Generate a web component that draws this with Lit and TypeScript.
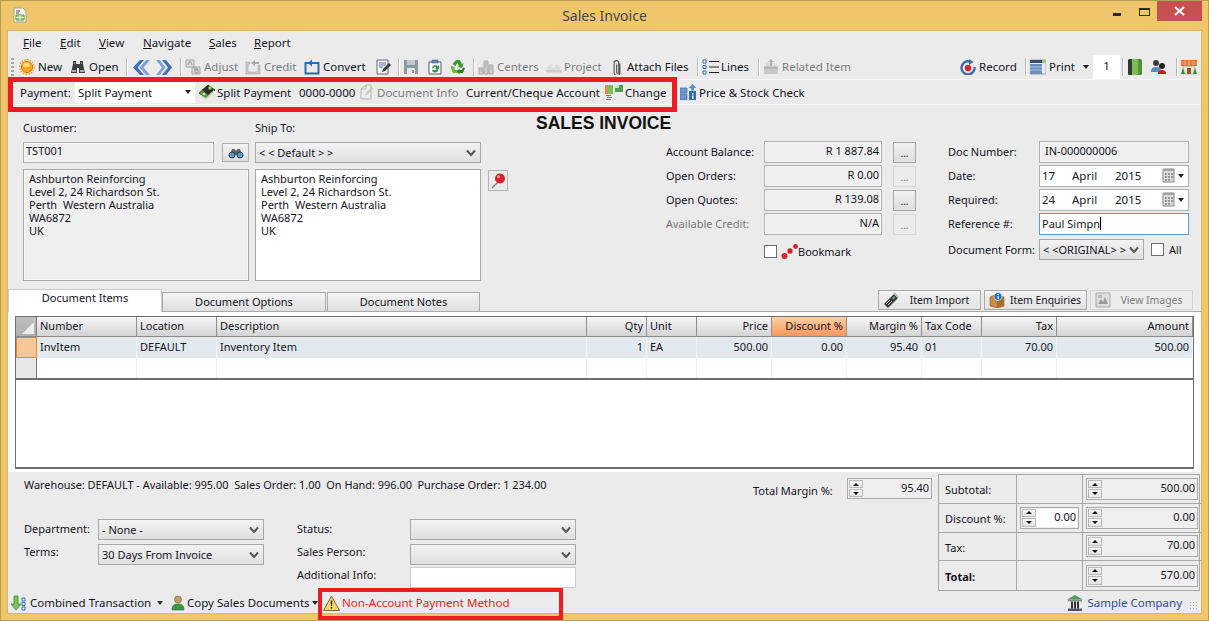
import { LitElement, html, css, svg } from 'lit';
import { customElement } from 'lit/decorators.js';

const ic = (body: unknown, w = 16, h = 16) =>
  html`<svg class="ic" width=${w} height=${h} viewBox="0 0 ${w} ${h}">${body}</svg>`;

const icons: Record<string, () => unknown> = {
  doc: () => ic(svg`<path d="M2 1h9l3 3v11H2z" fill="#f4f4ea" stroke="#a9a98f"/><path d="M4 4h4M4 6h3" stroke="#555"/><path d="M4 8h8v5H4z" fill="#9fd08a" stroke="#5c9c56"/><path d="M4 10.5h8M8 8v5" stroke="#e8f4e0"/>`),
  sun: () => ic(svg`<circle cx="8" cy="8" r="7.2" fill="none" stroke="#f0a52a" stroke-width="1.4" stroke-dasharray="1.6 1.2"/><circle cx="8" cy="8" r="5.6" fill="#f9a81c" stroke="#d9780f"/><ellipse cx="7.4" cy="6" rx="3.4" ry="2.2" fill="#ffdf7c"/>`),
  binoc: () => ic(svg`<path d="M3 2h3v3h4V2h3v3l2 9H9V9H7v5H1l2-9z" fill="#3f3f3f"/><path d="M2 11h4v2H2zM10 11h4v2h-4z" fill="#a9a9a9"/><path d="M4 3h1v2H4zM11 3h1v2h-1z" fill="#8a8a8a"/>`),
  back: () => ic(svg`<path d="M9 1 2 8.500 9 16h4L6.500 8.500 13 1z" fill="#3c6fb6"/><path d="M15 1 8.500 8.500 15 16h4l-6.500-7.500L19 1z" fill="#7da3d6"/>`, 20, 17),
  fwd: () => ic(svg`<path d="M2 1h3.500l6 7.500-6 7.500H2l6-7.500z" fill="#7da3d6"/><path d="M8 1h4l6 7.500-6 7.500H8l6-7.500z" fill="#3c6fb6"/>`, 20, 17),
  adjust: () => ic(svg`<path d="M1 1h8v7H1zM7 8h8v7H7z" fill="#dcdcdc" stroke="#a8a8a8"/><path d="M3 6l2-4 2 4M9 9h3l1 2-3 0zM10 11h3v3h-3z" fill="none" stroke="#9a9a9a"/>`),
  credit: () => ic(svg`<path d="M1 3h4v2H3v8h10V6h2v9H1z" fill="#c9c9c9" stroke="#a5a5a5" stroke-width=".6"/><path d="M6 4l4-3v2h4v2h-4v2z" fill="#a9a9a9"/>`),
  convert: () => ic(svg`<path d="M5 4H1.500v10.500h13V4h-3" fill="none" stroke="#2c6db5" stroke-width="2"/><path d="M4 4l4-3.500V3h6v2H8v2.500z" fill="#2c6db5"/>`),
  edit: () => ic(svg`<path d="M2 1h11v14H2z" fill="#f2f4f7" stroke="#667"/><path d="M4 4h7M4 6h7M4 8h4" stroke="#4d76ad"/><path d="M7 13l1-3 6-6 2 2-6 6z" fill="#3a3a3a"/>`),
  floppy: () => ic(svg`<path d="M1 1h14v14H1z" fill="#8f9aa0"/><path d="M4 1h8v5H4z" fill="#c3c9cd"/><path d="M4 9h8v6H4z" fill="#e3e5e6"/><path d="M9 11h2v3H9z" fill="#8f9aa0"/>`),
  clip: () => ic(svg`<path d="M2 3h12v12H2z" fill="#fff" stroke="#4a5a6d"/><path d="M5 1h6v3H5z" fill="#6c86a8" stroke="#3e5878" stroke-width=".6"/><path d="M5 9a3 3 0 0 1 5.500-1.500L12 6v4H8l1.300-1.300A1.800 1.800 0 0 0 6 9.500z" fill="#2f9a45"/><path d="M11 10a3 3 0 0 1-6 1l1.300-.5A1.800 1.800 0 0 0 9.500 10z" fill="#2f9a45"/>`),
  recycle: () => ic(svg`<path d="M6 1h4l2 4 1.500-1-1 5-5-1 1.500-1-1.500-3-2 3-3-2z" fill="#3f9a35"/><path d="M1 9l2 5h5v-3H5l-1-2 1.500-1-4.500-1z" fill="#66b84f"/><path d="M15 9l-2 5H9.500v1.500L7 12.500 9.500 9.500V11H12l1-2.500z" fill="#2f7e2a"/>`),
  centers: () => ic(svg`<path d="M1 9h4v6H1zM6 2h4v13H6zM11 6h4v9h-4z" fill="#cfcfcf" stroke="#a6a6a6"/><path d="M7.500 4h1M7.500 6h1M7.500 8h1M12.500 8h1M12.500 10h1M2.500 11h1" stroke="#8e8e8e"/>`),
  project: () => ic(svg`<path d="M2 11a6.500 6.500 0 0 1 13 0z" fill="#dcdcdc"/><path d="M1 11h16v2.500H1z" fill="#cbcbcb"/><path d="M7 4.500h3V9H7z" fill="#e9e9e9"/>`, 18, 16),
  paperclip: () => ic(svg`<path d="M9 4v8.500a2.500 2.500 0 0 1-5 0V3.500a2 2 0 0 1 4 0V12a.9.900 0 0 1-1.800 0V5" fill="none" stroke="#555" transform="translate(-.5 0) scale(1.150 1.100)"/>`, 12, 16),
  lines: () => ic(svg`<path d="M1 1h3v3H1zM1 6.500h3v3H1zM1 12h3v3H1z" fill="#fff" stroke="#2c6db5"/><path d="M7 2.500h10M7 8h10M7 13.500h10" stroke="#222" stroke-width="1.200"/>`, 18, 16),
  related: () => ic(svg`<path d="M1 7h14v8H1z" fill="#c8c8c8"/><path d="M1 7l3-3h8l3 3z" fill="#dedede"/><path d="M8 0l3 3H9v4H7V3H5z" fill="#b2b2b2"/><path d="M1 9h14" stroke="#a2a2a2"/>`),
  record: () => ic(svg`<path d="M9.500 2.500A6.500 6.500 0 1 0 14.500 8" fill="none" stroke="#3d6ea8" stroke-width="2.400"/><path d="M9 0l4.500 3-4.500 3z" fill="#3d6ea8"/><circle cx="8" cy="9" r="3.200" fill="#d8222a"/>`),
  print: () => ic(svg`<path d="M0 1h16v14H0z" fill="#e9edf3" stroke="#5f6f85" stroke-width=".6"/><path d="M0 1h12v3H0z" fill="#3a4b66"/><path d="M12 1h4v3h-4z" fill="#9cc47c"/><path d="M0 5h12v10H0z" fill="#6d8fbc"/><path d="M0 8h12M0 11h12" stroke="#a9c0dd"/>`),
  book: () => ic(svg`<rect x="0" y="0" width="14" height="16" rx="1.500" fill="#4f9434"/><path d="M0 1.500A1.500 1.500 0 0 1 1.500 0H4v16H1.500A1.500 1.500 0 0 1 0 14.500z" fill="#333a33"/><path d="M4 0h6v16H4z" fill="#7cbc55"/>`, 15, 16),
  people: () => ic(svg`<circle cx="5" cy="4" r="3" fill="#3b3b3b"/><path d="M0 13c0-4 2-5 5-5s5 1 5 5z" fill="#5d87bd"/><circle cx="11" cy="7" r="3" fill="#222"/><path d="M7 15c0-3 1.500-4 4-4s4 1 4 4z" fill="#d3161c"/>`),
  house: () => ic(svg`<path d="M0 1h16v6H0z" fill="#e9622a"/><path d="M0 3h16M0 5h16M4 1v6M8 1v6M12 1v6" stroke="#fbc8a6" stroke-width=".6"/><path d="M2 7h12v8H2z" fill="#e8e4d0" stroke="#888" stroke-width=".5"/><path d="M6 9h4v6H6z" fill="#8a5a2a"/><path d="M0 15l2-6 2 6zM12 15l2-6 2 6z" fill="#2f8d35"/>`),
  split: () => ic(svg`<path d="M0 9l9-8 7 5-9 9z" fill="#5c9a44" stroke="#1f3d1a" stroke-width=".8"/><path d="M3 6l6-5 6 5-6 5z" fill="#2e2e2e"/><path d="M1 11l6 4 8-8" fill="none" stroke="#cfe7bb" stroke-width="1.400"/><circle cx="11" cy="4" r="1.800" fill="#8fd06a"/><circle cx="5" cy="10" r="1.300" fill="#cfe7bb"/>`),
  docinfo: () => ic(svg`<path d="M3 5l5-4h5v14H3z" fill="#ececec" stroke="#b5b5b5"/><path d="M3 5h5V1" fill="none" stroke="#b5b5b5"/><path d="M7 12l1-3 6-6 1.500 1.500-6 6z" fill="#c6c6c6"/>`),
  change: () => ic(svg`<path d="M0 1h8v9H0z" fill="#e98a3c"/><path d="M3 1h5v9H3z" fill="#7ebc5a"/><path d="M10 1h8v7h-8z" fill="#4fa14c"/><path d="M10 1h4v3h-4z" fill="#cfe7bb"/><path d="M1 11h5v1H1zM2 13h5v1H2zM1 15h5v1H1z" fill="#777"/>`, 18, 16),
  price: () => ic(svg`<path d="M0 4h7v5H0zM0 10h7v6H0z" fill="#6d97cc" stroke="#2d5f9e" stroke-width=".6"/><path d="M9 7h7v9H9z" fill="#2d6db5"/><path d="M12.500 0l4 4h-2.500v2.500h-3V4H8.500z" fill="#5d93d3"/><path d="M12 9h1.500v1.500H12zM12 11.500h1.500V15H12z" fill="#fff"/>`),
  binosmall: () => ic(svg`<path d="M4 2h2.500l1.500 2 1.500-2H12l2 6H2z" fill="#5a6670"/><circle cx="4" cy="8" r="3" fill="#5b9bd5" stroke="#29343d"/><circle cx="12" cy="8" r="3" fill="#5b9bd5" stroke="#29343d"/>`, 16, 12),
  pin: () => ic(svg`<path d="M2 15l6-6" stroke="#8a7a5a" stroke-width="1.200"/><circle cx="10" cy="5.500" r="5" fill="#dd2027"/><circle cx="8.500" cy="3.800" r="1.500" fill="#f79a9d"/>`),
  cal: () => ic(svg`<path d="M1 1h11v13H1z" fill="#dcdcdc" stroke="#8a8a8a"/><path d="M1 1h11v2H1z" fill="#a5a5a5"/><path d="M3 5h2v2H3zM6 5h2v2H6zM9 5h2v2H9zM3 8h2v2H3zM6 8h2v2H6zM9 8h2v2H9zM3 11h2v2H3zM6 11h2v2H6z" fill="#9a9a9a"/>`, 14, 16),
  dots: () => ic(svg`<circle cx="3.500" cy="13" r="3" fill="#d8222a"/><circle cx="9" cy="8" r="2.700" fill="#d8222a"/><circle cx="14.500" cy="3.500" r="2.400" fill="#d8222a"/>`, 17, 16),
  scanner: () => ic(svg`<path d="M1 12L11 2l4 4-10 10z" fill="#3a3a3a"/><path d="M9 6l2-2 1.500 1.500-2 2z" fill="#62b04c"/><path d="M3 12l4-4M5 13l4-4" stroke="#c8c8c8"/><path d="M11 1l4 4" stroke="#bbb" stroke-width="2"/>`),
  enquire: () => ic(svg`<path d="M1 5l7-3 7 3v9l-7 2-7-2z" fill="#c98b46" stroke="#8a5a24" stroke-width=".6"/><path d="M8 7v9l7-2V5z" fill="#a56d30"/><circle cx="9" cy="4.500" r="4" fill="#1f6fc0" stroke="#fff" stroke-width=".6"/><path d="M8.500 2h1.200v1.200H8.500zM8.500 4h1.200v3H8.500z" fill="#fff"/>`),
  images: () => ic(svg`<path d="M1 1h14v14H1z" fill="#dedede" stroke="#ababab"/><path d="M3 12l3-5 2 3 2-5 3 7z" fill="#9b9b9b"/><path d="M3 3h4v3H3z" fill="#bcbcbc"/>`),
  combined: () => ic(svg`<path d="M3 1h4v8h3l-5 6-5-6h3z" fill="#7fc65a" stroke="#2e8a2a" stroke-width=".8"/><path d="M11 3h3v3h-3zM11 7.500h3v3h-3zM11 12h3v3h-3z" fill="#fff" stroke="#2c6db5"/>`),
  person: () => ic(svg`<circle cx="8" cy="4.500" r="3.500" fill="#c79a6a" stroke="#7a5c38" stroke-width=".6"/><path d="M2 15c0-5 2.500-6 6-6s6 1 6 6z" fill="#3f9a3a" stroke="#276c24" stroke-width=".6"/>`),
  warn: () => ic(svg`<path d="M8.500 1l8 14.500H.5z" fill="#f8d55c" stroke="#7a6a3a"/><path d="M7.700 5.500h1.600L9 11H8zM7.800 12h1.400v1.500H7.800z" fill="#222"/>`, 17, 16),
  bank: () => ic(svg`<path d="M8 0l8 4.500H0z" fill="#4e9e5a"/><path d="M1 4.500h14v2H1z" fill="#7f8f84"/><path d="M3 6.500h10v7H3z" fill="#e8e8e8"/><path d="M4 6.500h2v7H4zM7 6.500h2v7H7zM10 6.500h2v7h-2z" fill="#333"/><path d="M1 13.500h14V16H1z" fill="#555"/>`),
};

type Tool = { icon?: string; label?: string; w?: number; off?: boolean; sep?: boolean; gap?: number };

const mainLeft: Tool[] = [
  { icon: 'sun', label: 'New', w: 51 },
  { icon: 'binoc', label: 'Open', w: 55 },
  { sep: true },
  { icon: 'back', w: 23 },
  { icon: 'fwd', w: 25 },
  { sep: true },
  { icon: 'adjust', label: 'Adjust', w: 60, off: true },
  { icon: 'credit', label: 'Credit', w: 59, off: true },
  { icon: 'convert', label: 'Convert', w: 71 },
  { icon: 'edit', w: 22 },
  { sep: true },
  { icon: 'floppy', w: 24, off: true },
  { icon: 'clip', w: 23 },
  { icon: 'recycle', w: 22 },
  { sep: true },
  { icon: 'centers', label: 'Centers', w: 67, off: true },
  { icon: 'project', label: 'Project', w: 65, off: true, gap: 1 },
  { icon: 'paperclip', label: 'Attach Files', w: 86, gap: 5 },
  { sep: true },
  { icon: 'lines', label: 'Lines', w: 55, gap: 1 },
  { sep: true },
  { icon: 'related', label: 'Related Item', w: 92, off: true },
];

const payTools: Tool[] = [
  { icon: 'split', label: 'Split Payment', w: 100, gap: 2 },
  { label: '0000-0000', w: 59 },
  { icon: 'docinfo', label: 'Document Info', w: 108, off: true },
  { label: 'Current/Cheque Account', w: 139 },
  { icon: 'change', label: 'Change', w: 75, gap: 2 },
  { icon: 'price', label: 'Price & Stock Check', w: 135 },
];

const columns = [
  { label: 'Number', w: 100 },
  { label: 'Location', w: 80 },
  { label: 'Description', w: 370 },
  { label: 'Qty', w: 60, right: true },
  { label: 'Unit', w: 50 },
  { label: 'Price', w: 75, right: true },
  { label: 'Discount %', w: 75, right: true, hot: true },
  { label: 'Margin %', w: 75, right: true },
  { label: 'Tax Code', w: 60 },
  { label: 'Tax', w: 75, right: true },
  { label: 'Amount', w: 136, right: true },
];
const rowOne = ['InvItem', 'DEFAULT', 'Inventory Item', '1', 'EA', '500.00', '0.00', '95.40', '01', '70.00', '500.00'];

const address = ['Ashburton Reinforcing', 'Level 2, 24 Richardson St.', 'Perth  Western Australia', 'WA6872', 'UK'];

@customElement('app-root')
export class AppRoot extends LitElement {
  static styles = css`
    :host {
      display: block;
      width: 1209px;
      height: 621px;
      overflow: hidden;
      font-family: 'Noto Sans', 'Open Sans', sans-serif;
      font-size: 11.5px;
      color: #14141e;
    }
    * { box-sizing: border-box; }
    .ic { display: block; flex: none; }
    .frame {
      position: relative;
      width: 1209px;
      height: 621px;
      background: #efc76a;
      border: 1px solid #b89c52;
      padding: 0 7px 7px;
      display: flex;
      flex-direction: column;
    }
    .titlebar { height: 30px; margin: 0 -7px; flex: none; display: flex; align-items: flex-start; position: relative; }
    .titlebar .app { margin: 6px 0 0 11px; }
    .titlebar .name { position: absolute; left: 0; right: 0; top: 5px; text-align: center; font-size: 14px; line-height: 20px; color: #444; }
    .controls { margin-left: auto; margin-right: 6px; display: flex; align-items: flex-start; }
    .min { width: 8px; height: 3px; background: #2a2a2a; margin: 12px 18px 0 0; }
    .max { width: 11px; height: 8px; border: 1px solid #2a2a2a; border-top-width: 2px; margin: 7px 7px 0 0; }
    .close { width: 45px; height: 20px; background: #c75050; display: flex; align-items: center; justify-content: center; }
    .client { flex: 1; background: #ebebeb; box-shadow: 0 0 0 1px #d7b86c; display: flex; flex-direction: column; min-height: 0; }

    .menu { height: 24px; flex: none; display: flex; align-items: flex-end; padding: 0 0 5px 15px; }
    .menu u { text-decoration: underline; text-underline-offset: 1px; }

    .bar { height: 25px; flex: none; display: flex; align-items: center; border-bottom: 1px solid #f7f7f7; white-space: nowrap; }
    .bar.main { padding-left: 3px; }
    .bar.main .tool span { margin-top: -2px; }
    .grip { width: 3px; height: 18px; margin-right: 4px; background: repeating-linear-gradient(#a8a8a8 0 2px, transparent 2px 4px); }
    .tool { display: flex; align-items: center; gap: 3px; padding-left: 1px; flex: none; height: 100%; }
    .tool.off { color: #7c7c7c; }
    .sep { width: 6px; height: 18px; flex: none; position: relative; }
    .sep.wide { width: 7px; }
    .sep::after { content: ''; position: absolute; left: 2px; top: 0; bottom: 0; width: 1px; background: #b9b9b9; box-shadow: 1px 0 0 #fff; }
    .spacer { flex: 1; }
    .caret { width: 0; height: 0; border: 3.5px solid transparent; border-top: 4px solid #222; border-bottom: 0; flex: none; }
    .copies { width: 27px; height: 24px; background: #fff; text-align: center; line-height: 22px; flex: none; }
    .caret-slot { width: 14px; display: flex; justify-content: center; flex: none; }
    .bar.pay { padding-left: 12px; }
    .pay-label { width: 55px; flex: none; }
    .pay-select { width: 120px; height: 22px; background: #fff; padding: 0 4px 0 3px; display: flex; align-items: center; justify-content: space-between; margin-right: 3px; flex: none; }

    .form { height: 183px; flex: none; display: flex; padding-left: 15px; font-size: 11px; }
    .col { width: 226px; flex: none; padding-top: 16px; }
    .ship { margin-left: 6px; }
    .cap { height: 14px; line-height: 14px; margin-bottom: 7px; }
    .cust-row { display: flex; justify-content: space-between; margin-bottom: 6px; height: 21px; }
    .ship-row { display: block; }
    .readonly { height: 21px; background: #efefef; border: 1px solid #b0b0b0; box-shadow: inset 0 0 0 1px #f8f8f8; padding: 0 2px; line-height: 16px; white-space: nowrap; }
    .cust-code { width: 191px; }
    .find { width: 27px; height: 19px; margin-top: 1px; border: 1px solid #b0b0b0; display: flex; align-items: center; justify-content: center; background: linear-gradient(#f2f2f2, #dcdcdc); }
    .combo { height: 21px; border: 1px solid #a8a8a8; background: linear-gradient(#f3f3f3, #dfdfdf); display: flex; align-items: center; justify-content: space-between; padding: 0 4px 0 3px; white-space: nowrap; font-size: 11px; }
    .chev { width: 10px; height: 8px; flex: none; }
    .addr { height: 112px; border: 1px solid #a8a8a8; padding: 2px 5px; line-height: 13px; background: #fff; }
    .addr.dim { background: #efefef; box-shadow: inset 0 0 0 1px #f8f8f8; }
    .addr div { white-space: pre; }
    .pin { width: 20px; height: 21px; margin: 65px 0 0 7px; border: 1px solid #b5b5b5; flex: none; display: flex; align-items: center; justify-content: center; }
    .mid { flex: none; width: 408px; }
    .doc-title { height: 36px; padding: 8px 0 0 28px; font-family: 'Liberation Sans', sans-serif; font-weight: 700; font-size: 17.500px; line-height: 20px; color: #111; }
    .balances { margin-left: 158px; display: grid; grid-template-columns: 98px 118px 34px; row-gap: 2px; grid-auto-rows: 22px; align-items: center; line-height: 20px; }
    .money { height: 22px; background: #efefef; border: 1px solid #b0b0b0; box-shadow: inset 0 0 0 1px #f8f8f8; text-align: right; padding-right: 2px; line-height: 18px; }
    .more { width: 23px; height: 21px; margin-left: 11px; border: 1px solid #a8a8a8; background: linear-gradient(#f0f0f0, #dedede); text-align: center; line-height: 20px; font-size: 10px; }
    .more.off { border-color: #d6d6d6; background: #ececec; color: #777; }
    .muted { color: #777; }
    .bookmark { margin: 8px 0 0 256px; display: flex; align-items: center; }
    .check { width: 13px; height: 13px; background: #fff; border: 1px solid #707070; flex: none; }
    .bookmark .ic { margin: 0 0 0 4px; }
    .docs { margin-left: 32px; width: 241px; padding-top: 36px; }
    .doc-rows { display: grid; grid-template-columns: 91px 150px; row-gap: 2px; grid-auto-rows: 22px; align-items: center; line-height: 20px; }
    .doc-rows .money { text-align: left; padding-left: 5px; line-height: 18px; }
    .date { height: 22px; background: #fff; border: 1px solid #b0b0b0; display: flex; align-items: center; padding: 0 4px 0 2px; font-size: 11.500px; }
    .date span:nth-child(1) { width: 30px; }
    .date span:nth-child(2) { width: 43px; }
    .date span:nth-child(3) { width: 44px; }
    .date .ic { margin-right: 2px; }
    .ref { height: 22px; background: #fff; border: 1px solid #5b9bd5; padding: 0 2px; line-height: 20px; }
    .cursor { display: inline-block; width: 1px; height: 13px; background: #000; vertical-align: -2px; }
    .doc-form { display: flex; align-items: center; margin-top: 4px; }
    .doc-form .name { width: 91px; flex: none; }
    .doc-form .combo { width: 105px; }
    .doc-form .check { margin: 0 5px 0 7px; }

    .tabs { height: 23px; flex: none; display: flex; align-items: flex-end; position: relative; font-size: 11px; }
    .tab { height: 19px; border: 1px solid #aaa; border-bottom: 0; background: linear-gradient(#f4f4f4, #dedede); text-align: center; line-height: 17px; flex: none; }
    .tab.on { height: 23px; background: #fff; border-color: #ccc; line-height: 16px; position: relative; top: 1px; z-index: 1; }
    .tab-actions { margin-left: auto; margin-right: 8px; display: flex; gap: 3px; align-self: flex-end; margin-bottom: 1px; font-size: 10.400px; }
    .action { width: 103px; height: 20px; border: 1px solid #aaa; background: linear-gradient(#f3f3f3, #e2e2e2); display: flex; align-items: center; padding: 0 4px 0 4px; gap: 4px; white-space: nowrap; }
    .action span { flex: 1; text-align: center; }
    .action.off { color: #7c7c7c; border-color: #d6d6d6; background: #ececec; }

    .panel { height: 161px; flex: none; background: #fff; border-top: 1px solid #aaa; padding: 4px 6px 3px 7px; font-size: 11px; }
    .sheet { height: 100%; width: 1179px; border: 1px solid #6e6e6e; border-bottom-width: 2px; }
    .sheet-row { display: flex; height: 21px; }
    .sheet-row.top { height: 20px; }
    .gutter { width: 21px; flex: none; border-right: 1px solid #7a7a7a; }
    .top .gutter { background: linear-gradient(#c0c0c0, #b0b0b0); border-bottom: 1px solid #8a8a8a; position: relative; }
    .top .gutter::after { content: ''; position: absolute; right: 2px; bottom: 2px; border: 6px solid transparent; border-right-color: #eee; border-bottom-color: #eee; }
    .gutter.live { background: #f7c796; border: 1px solid #e8863a; }
    .gutter.blank { background: #e8e8e8; }
    .cell { flex: none; padding: 0 3px; line-height: 20px; border-right: 1px solid #f0f0f0; white-space: nowrap; overflow: hidden; }
    .cell.r { text-align: right; }
    .top .cell { background: linear-gradient(#f7f7f7, #d3d3d3); border-right: 1px solid #8e8e8e; border-bottom: 1px solid #8a8a8a; line-height: 18px; }
    .top .cell.hot { background: linear-gradient(#fdd0a8, #f7975a); }
    .live-row .cell { background: #e3eaef; border-right-color: #f0f4f7; }
    .blank-row { border-bottom: 2px solid #6e6e6e; height: 22px; }

    .lower { height: 120px; flex: none; display: flex; font-size: 11px; }
    .lower-left { width: 930px; flex: none; }
    .stock-row { height: 47px; display: flex; padding: 6px 6px 0 16px; }
    .stock { line-height: 14px; font-size: 10.900px; }
    .margin-label { margin: 6px 0 0 auto; line-height: 14px; width: 94px; }
    .spin { border: 1px solid #aaa; background: #efefef; display: flex; height: 22px; padding: 1px; text-align: right; }
    .arrows { width: 14px; flex: none; display: flex; flex-direction: column; gap: 1px; }
    .arrows i { flex: 1; background: linear-gradient(#f8f8f8, #e4e4e4); border: 1px solid #bbb; display: flex; align-items: center; justify-content: center; }
    .arrows b { width: 0; height: 0; border: 3px solid transparent; }
    .arrows i:first-child b { border-bottom: 3px solid #111; border-top: 0; }
    .arrows i:last-child b { border-top: 3px solid #111; border-bottom: 0; }
    .spin span { flex: 1; padding-right: 1px; line-height: 15px; }
    .spin.edit span { background: #fff; }
    .margin-spin { width: 85px; height: 21px; }
    .fields { display: grid; grid-template-columns: 74px 166px 146px 166px; grid-template-rows: 25px 23px 21px; padding-left: 16px; align-items: start; }
    .fields .second { margin-left: 33px; width: 113px; }
    .lbl { height: 21px; line-height: 20px; }
    .lbl.up { line-height: 16px; }
    .blank-input { height: 21px; background: #fff; border: 1px solid #ccc; }
    .totals { width: 262px; height: 117px; margin-top: 2px; flex: none; display: grid; grid-template-columns: 78px 66px 118px; grid-template-rows: repeat(4, 1fr); border: 1px solid #a8a8a8; }
    .tc { border-right: 1px solid #a8a8a8; border-bottom: 1px solid #a8a8a8; display: flex; align-items: center; padding: 0 3px; }
    .tc:nth-child(3n) { border-right: 0; }
    .tc:nth-last-child(-n+3) { border-bottom: 0; }
    .tc.lab { padding: 2px 0 0 6px; }
    .tc .spin { width: 100%; }
    .strong { font-weight: 700; }

    .status { height: 21px; flex: none; display: flex; align-items: center; padding-left: 3px; white-space: nowrap; }
    .stat { display: flex; align-items: center; gap: 3px; flex: none; }
    .stat.combined { width: 147px; }
    .stat.copy { width: 142px; margin-left: 12px; gap: 1px; }
    .stat.warn { color: #ec1c24; gap: 2px; margin-left: 5px; font-size: 11.600px; }
    .company { margin-left: auto; color: #2a4a9a; display: flex; align-items: center; gap: 4px; }
    .resize { width: 9px; height: 9px; margin: 6px 3px 0 7px; background: radial-gradient(circle, #b0b0b0 1px, transparent 1px) 0 0 / 3px 3px; }

    .callout { position: absolute; border: 5px solid #ed1c24; pointer-events: none; }
    .callout.pay { left: 7px; top: 76px; width: 669px; height: 35px; }
    .callout.msg { left: 317px; top: 587px; width: 245px; height: 32px; border-width: 4px; }
  `;

  private tool(t: Tool) {
    if (t.sep) return html`<div class="sep"></div>`;
    const gap = t.gap !== undefined ? `gap:${t.gap}px;` : '';
    return html`<div class="tool ${t.off ? 'off' : ''}" style="width:${t.w}px;${gap}">
      ${t.icon ? icons[t.icon]() : ''}${t.label ? html`<span>${t.label}</span>` : ''}
    </div>`;
  }

  private chev() {
    return html`<svg class="chev" viewBox="0 0 10 8"><path d="M1 1.500 5 6l4-4.500" fill="none" stroke="#555" stroke-width="2"/></svg>`;
  }

  private spin(value: string, extra = '') {
    return html`<div class="spin ${extra}">
      <div class="arrows"><i><b></b></i><i><b></b></i></div><span>${value}</span>
    </div>`;
  }

  private cap(first: string, rest: string) {
    return html`<span><u>${first}</u>${rest}</span>`;
  }

  render() {
    return html`
      <div class="frame">
        <header class="titlebar">
          <div class="app">${icons.doc()}</div>
          <div class="name">Sales Invoice</div>
          <div class="controls">
            <div class="min"></div>
            <div class="max"></div>
            <div class="close">
              <svg width="11" height="10" viewBox="0 0 11 10"><path d="M1 1l9 8M10 1l-9 8" stroke="#fff" stroke-width="2"/></svg>
            </div>
          </div>
        </header>

        <div class="client">
          <nav class="menu">
            <div style="width:37px">${this.cap('F', 'ile')}</div>
            <div style="width:39px">${this.cap('E', 'dit')}</div>
            <div style="width:44px">${this.cap('V', 'iew')}</div>
            <div style="width:66px">${this.cap('N', 'avigate')}</div>
            <div style="width:45px">${this.cap('S', 'ales')}</div>
            <div>${this.cap('R', 'eport')}</div>
          </nav>

          <div class="bar main">
            <div class="grip"></div>
            ${mainLeft.map((t) => this.tool(t))}
            <div class="spacer"></div>
            ${this.tool({ icon: 'record', label: 'Record', w: 64 })}
            <div class="sep"></div>
            ${this.tool({ icon: 'print', label: 'Print', w: 50 })}
            <div class="caret-slot"><div class="caret"></div></div>
            <div class="copies">1</div>
            <div class="sep wide"></div>
            ${this.tool({ icon: 'book', w: 23 })}
            ${this.tool({ icon: 'people', w: 24 })}
            <div class="sep"></div>
            ${this.tool({ icon: 'house', w: 21 })}
          </div>

          <div class="bar pay">
            <div class="pay-label">Payment:</div>
            <div class="pay-select"><span>Split Payment</span><div class="caret"></div></div>
            ${payTools.map((t) => this.tool(t))}
          </div>

          <section class="form">
            <div class="col">
              <div class="cap">Customer:</div>
              <div class="cust-row">
                <div class="readonly cust-code">TST001</div>
                <div class="find">${icons.binosmall()}</div>
              </div>
              <div class="addr dim">${address.map((l) => html`<div>${l}</div>`)}</div>
            </div>
            <div class="col ship">
              <div class="cap">Ship To:</div>
              <div class="cust-row ship-row">
                <div class="combo"><span>&lt; &lt; Default &gt; &gt;</span>${this.chev()}</div>
              </div>
              <div class="addr">${address.map((l) => html`<div>${l}</div>`)}</div>
            </div>
            <div class="pin">${icons.pin()}</div>
            <div class="mid">
              <div class="doc-title">SALES INVOICE</div>
              <div class="balances">
                <div>Account Balance:</div><div class="money">R 1 887.84</div><div class="more">...</div>
                <div>Open Orders:</div><div class="money">R 0.00</div><div class="more off">...</div>
                <div>Open Quotes:</div><div class="money">R 139.08</div><div class="more">...</div>
                <div class="muted">Available Credit:</div><div class="money">N/A</div><div class="more off">...</div>
              </div>
              <div class="bookmark"><div class="check"></div>${icons.dots()}<span>Bookmark</span></div>
            </div>
            <div class="docs">
              <div class="doc-rows">
                <div>Doc Number:</div><div class="money">IN-000000006</div>
                <div>Date:</div>
                <div class="date"><span>17</span><span>April</span><span>2015</span><div class="spacer"></div>${icons.cal()}<div class="caret"></div></div>
                <div>Required:</div>
                <div class="date"><span>24</span><span>April</span><span>2015</span><div class="spacer"></div>${icons.cal()}<div class="caret"></div></div>
                <div>Reference #:</div>
                <div class="ref">Paul Simpn<span class="cursor"></span></div>
              </div>
              <div class="doc-form">
                <div class="name">Document Form:</div>
                <div class="combo"><span>&lt; &lt;ORIGINAL&gt; &gt;</span>${this.chev()}</div>
                <div class="check"></div><span>All</span>
              </div>
            </div>
          </section>

          <div class="tabs">
            <div class="tab on" style="width:154px">Document Items</div>
            <div class="tab" style="width:164px">Document Options</div>
            <div class="tab" style="width:153px;margin-left:1px">Document Notes</div>
            <div class="tab-actions">
              <div class="action">${icons.scanner()}<span>Item Import</span></div>
              <div class="action">${icons.enquire()}<span>Item Enquiries</span></div>
              <div class="action off">${icons.images()}<span>View Images</span></div>
            </div>
          </div>

          <section class="panel">
            <div class="sheet">
              <div class="sheet-row top">
                <div class="gutter"></div>
                ${columns.map((c) => html`<div class="cell ${c.right ? 'r' : ''} ${c.hot ? 'hot' : ''}" style="width:${c.w}px">${c.label}</div>`)}
              </div>
              <div class="sheet-row live-row">
                <div class="gutter live"></div>
                ${columns.map((c, i) => html`<div class="cell ${c.right ? 'r' : ''}" style="width:${c.w}px">${rowOne[i]}</div>`)}
              </div>
              <div class="sheet-row blank-row">
                <div class="gutter blank"></div>
                ${columns.map((c) => html`<div class="cell" style="width:${c.w}px"></div>`)}
              </div>
            </div>
          </section>

          <section class="lower">
            <div class="lower-left">
              <div class="stock-row">
                <div class="stock">Warehouse: DEFAULT - Available: 995.00&nbsp; Sales Order: 1.00&nbsp; On Hand: 996.00&nbsp; Purchase Order: 1 234.00</div>
                <div class="margin-label">Total Margin %:</div>
                ${this.spin('95.40', 'margin-spin')}
              </div>
              <div class="fields">
                <div class="lbl">Department:</div>
                <div class="combo"><span>- None -</span>${this.chev()}</div>
                <div class="lbl second">Status:</div>
                <div class="combo"><span></span>${this.chev()}</div>
                <div class="lbl up">Terms:</div>
                <div class="combo"><span>30 Days From Invoice</span>${this.chev()}</div>
                <div class="lbl up second">Sales Person:</div>
                <div class="combo"><span></span>${this.chev()}</div>
                <div></div><div></div>
                <div class="lbl up second">Additional Info:</div>
                <div class="blank-input"></div>
              </div>
            </div>
            <div class="totals">
              <div class="tc lab">Subtotal:</div><div class="tc"></div><div class="tc">${this.spin('500.00')}</div>
              <div class="tc lab">Discount %:</div><div class="tc">${this.spin('0.00', 'edit')}</div><div class="tc">${this.spin('0.00')}</div>
              <div class="tc lab">Tax:</div><div class="tc"></div><div class="tc">${this.spin('70.00')}</div>
              <div class="tc lab strong">Total:</div><div class="tc"></div><div class="tc">${this.spin('570.00')}</div>
            </div>
          </section>

          <footer class="status">
            <div class="stat combined">${icons.combined()}<span>Combined Transaction</span><div class="caret" style="margin-left:3px"></div></div>
            <div class="stat copy">${icons.person()}<span>Copy Sales Documents</span></div>
            <div class="caret"></div>
            <div class="stat warn">${icons.warn()}<span>Non-Account Payment Method</span></div>
            <div class="company">${icons.bank()}<span>Sample Company</span></div>
            <div class="resize"></div>
          </footer>
        </div>

        <div class="callout pay"></div>
        <div class="callout msg"></div>
      </div>
    `;
  }
}
